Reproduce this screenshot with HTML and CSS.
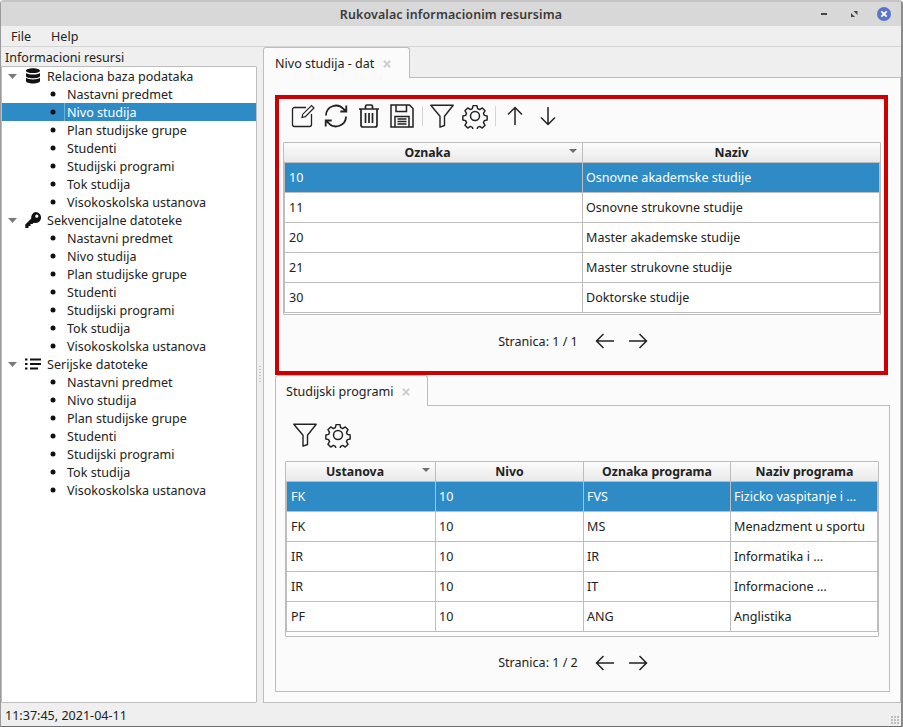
FILE: index.html
```html
<!DOCTYPE html>
<html lang="sr">
<head>
<meta charset="utf-8">
<title>Rukovalac informacionim resursima</title>
<link rel="stylesheet" href="styles.css">
</head>
<body>
<svg class="defs" width="0" height="0" aria-hidden="true">
  <symbol id="i-filter" viewBox="0 0 24 24"><path d="M.8 1.200h22.400l-8.700 11v9.300l-4.500 1.700v-11z" fill="none" stroke="#222" stroke-width="1.400" stroke-linejoin="round"/></symbol>
  <symbol id="i-gear" viewBox="0 0 26 26"><path d="M10.800 1.500h4.400l.7 3.300 2.300 1 2.900-1.800 3.100 3.100-1.800 2.900 1 2.300 3.100.7v4.400l-3.100.7-1 2.300 1.800 2.900-3.100 3.100-2.900-1.800-2.300 1-.7 3.100h-4.400l-.7-3.100-2.300-1-2.900 1.800-3.100-3.100 1.800-2.900-1-2.300-3.100-.7v-4.400l3.100-.7 1-2.300-1.800-2.900 3.100-3.100 2.900 1.800 2.300-1z" transform="translate(1.300 1.300) scale(.9)" fill="none" stroke="#222" stroke-width="1.600" stroke-linejoin="round"/><circle cx="13" cy="13" r="4.500" fill="none" stroke="#222" stroke-width="1.500"/></symbol>
  <symbol id="i-left" viewBox="0 0 20 16"><path d="M19 8H1.500M8.500 1l-7 7 7 7" fill="none" stroke="#222" stroke-width="1.500"/></symbol>
  <symbol id="i-right" viewBox="0 0 20 16"><path d="M1 8h17.500M11.500 1l7 7-7 7" fill="none" stroke="#222" stroke-width="1.500"/></symbol>
  <symbol id="i-bullet" viewBox="0 0 6 6"><circle cx="3" cy="3" r="2.500" fill="#111"/></symbol>
  <symbol id="i-expand" viewBox="0 0 9 5"><path d="M0 0h9L4.500 5z" fill="#7b7b7b"/></symbol>
  <symbol id="i-close" viewBox="0 0 8 8"><path d="M.8.800l6.400 6.400M7.200.800L.8 7.200" fill="none" stroke="#cfcfcf" stroke-width="2"/></symbol>
</svg>
<div class="window">
  <header class="titlebar">
    <span class="title">Rukovalac informacionim resursima</span>
    <div class="winbtns">
      <svg class="winbtn" width="16" height="16" viewBox="0 0 16 16"><rect x="3" y="7" width="6" height="2" fill="#444"/></svg>
      <svg class="winbtn" width="16" height="16" viewBox="0 0 16 16"><path d="M6.500 5h4v4zM4 7l4 4H4z" fill="#444"/></svg>
      <svg class="winbtn" width="16" height="16" viewBox="0 0 16 16"><circle cx="8" cy="8" r="7" fill="#5a74c9"/><path d="M5.300 5.300l5.400 5.400M10.700 5.300l-5.400 5.400" stroke="#fff" stroke-width="1.800"/></svg>
    </div>
  </header>
  <nav class="menubar"><span>File</span><span>Help</span></nav>
  <main class="content">
    <aside class="sidebar">
      <div class="dock-title">Informacioni resursi</div>
      <div class="tree">
        <div class="group"><svg class="arrow"><use href="#i-expand"/></svg>
          <svg class="gicon" viewBox="0 0 16 16"><path d="M8 .3c3.800 0 7 1 7 2.400S11.800 5.100 8 5.100 1 4.100 1 2.700 4.200.3 8 .3zM1 5c1.500 1.200 4.200 1.600 7 1.600s5.500-.4 7-1.600v2.900c0 1.300-3.200 2.300-7 2.300S1 9.200 1 7.900zM1 9.800c1.500 1.200 4.200 1.600 7 1.600s5.500-.4 7-1.600v3.300c0 1.400-3.200 2.500-7 2.500s-7-1.100-7-2.500z" fill="#111"/></svg>
          <span>Relaciona baza podataka</span></div>
        <div class="leaf"><svg class="bullet"><use href="#i-bullet"/></svg><span>Nastavni predmet</span></div>
        <div class="leaf selected"><svg class="bullet"><use href="#i-bullet"/></svg><span class="focus">Nivo studija</span></div>
        <div class="leaf"><svg class="bullet"><use href="#i-bullet"/></svg><span>Plan studijske grupe</span></div>
        <div class="leaf"><svg class="bullet"><use href="#i-bullet"/></svg><span>Studenti</span></div>
        <div class="leaf"><svg class="bullet"><use href="#i-bullet"/></svg><span>Studijski programi</span></div>
        <div class="leaf"><svg class="bullet"><use href="#i-bullet"/></svg><span>Tok studija</span></div>
        <div class="leaf"><svg class="bullet"><use href="#i-bullet"/></svg><span>Visokoskolska ustanova</span></div>
        <div class="group"><svg class="arrow"><use href="#i-expand"/></svg>
          <svg class="gicon" viewBox="0 0 16 16"><path d="M10.500 0a5.500 5.500 0 1 1-1.700 10.700L7.500 12H5.500v2H3.500v2H.3v-3.500l6-6A5.500 5.500 0 0 1 10.500 0zm1.300 2.600a1.600 1.600 0 1 0 0 3.200 1.600 1.600 0 0 0 0-3.200z" fill="#111"/></svg>
          <span>Sekvencijalne datoteke</span></div>
        <div class="leaf"><svg class="bullet"><use href="#i-bullet"/></svg><span>Nastavni predmet</span></div>
        <div class="leaf"><svg class="bullet"><use href="#i-bullet"/></svg><span>Nivo studija</span></div>
        <div class="leaf"><svg class="bullet"><use href="#i-bullet"/></svg><span>Plan studijske grupe</span></div>
        <div class="leaf"><svg class="bullet"><use href="#i-bullet"/></svg><span>Studenti</span></div>
        <div class="leaf"><svg class="bullet"><use href="#i-bullet"/></svg><span>Studijski programi</span></div>
        <div class="leaf"><svg class="bullet"><use href="#i-bullet"/></svg><span>Tok studija</span></div>
        <div class="leaf"><svg class="bullet"><use href="#i-bullet"/></svg><span>Visokoskolska ustanova</span></div>
        <div class="group"><svg class="arrow"><use href="#i-expand"/></svg>
          <svg class="gicon" viewBox="0 0 16 16"><path d="M0 2.500h2.500v2H0zM5 2.500H16v2H5zM0 7h2.500v2H0zM5 7H16v2H5zM0 11.500h2.500v2H0zM5 11.500H13v2H5z" fill="#111"/></svg>
          <span>Serijske datoteke</span></div>
        <div class="leaf"><svg class="bullet"><use href="#i-bullet"/></svg><span>Nastavni predmet</span></div>
        <div class="leaf"><svg class="bullet"><use href="#i-bullet"/></svg><span>Nivo studija</span></div>
        <div class="leaf"><svg class="bullet"><use href="#i-bullet"/></svg><span>Plan studijske grupe</span></div>
        <div class="leaf"><svg class="bullet"><use href="#i-bullet"/></svg><span>Studenti</span></div>
        <div class="leaf"><svg class="bullet"><use href="#i-bullet"/></svg><span>Studijski programi</span></div>
        <div class="leaf"><svg class="bullet"><use href="#i-bullet"/></svg><span>Tok studija</span></div>
        <div class="leaf"><svg class="bullet"><use href="#i-bullet"/></svg><span>Visokoskolska ustanova</span></div>
      </div>
    </aside>
    <div class="splitter"><i class="grip"></i></div>
    <section class="workspace">
      <div class="tabbar"><div class="tab tab-main"><span>Nivo studija - dat</span><svg class="close"><use href="#i-close"/></svg></div></div>
      <div class="pane">
        <div class="panel-top">
          <div class="toolbar">
            <svg class="tool t-edit" viewBox="0 0 24 24"><path d="M15 3.500H3.500a2 2 0 0 0-2 2v15a2 2 0 0 0 2 2h15a2 2 0 0 0 2-2V10" fill="none" stroke="#222" stroke-width="1.300"/><path d="M11 13.500l.8-3.300L20.500 1.500l2.500 2.500-8.700 8.700z" fill="none" stroke="#222" stroke-width="1.200"/></svg>
            <svg class="tool t-sync" viewBox="0 0 24 24"><path d="M2 11.500A10 10 0 0 1 19.500 5L22 7.500M22.300 1.500v6h-6M22 12.500A10 10 0 0 1 4.500 19L2 16.500M1.700 22.500v-6h6" fill="none" stroke="#222" stroke-width="1.800"/></svg>
            <svg class="tool t-trash" viewBox="0 0 22 24"><path d="M1 5h20M7.500 5V2.500a1.500 1.500 0 0 1 1.500-1.500h4a1.500 1.500 0 0 1 1.500 1.500V5M3 5v16a2 2 0 0 0 2 2h12a2 2 0 0 0 2-2V5M7.500 9v10M11 9v10M14.500 9v10" fill="none" stroke="#222" stroke-width="1.700"/></svg>
            <svg class="tool t-save" viewBox="0 0 24 24"><path d="M1 1h18.500L23 4.500V23H1zM6 1v6.500h10.500V1M5 23V12.500h14V23M7.500 15h9M7.500 17.500h9M7.500 20h9" fill="none" stroke="#222" stroke-width="1.500"/></svg>
            <i class="sep"></i>
            <svg class="tool t-filter"><use href="#i-filter"/></svg>
            <svg class="tool t-gear"><use href="#i-gear"/></svg>
            <i class="sep sep-b"></i>
            <svg class="tool t-arrow" viewBox="0 0 16 20"><path d="M8 19V2M1 8.500L8 1.500l7 7" fill="none" stroke="#222" stroke-width="1.500"/></svg>
            <svg class="tool t-arrow" viewBox="0 0 16 20"><path d="M8 1v17M1 11.500l7 7 7-7" fill="none" stroke="#222" stroke-width="1.500"/></svg>
          </div>
          <div class="tablewrap">
            <table class="grid grid-two">
              <thead><tr><th class="sorted">Oznaka</th><th>Naziv</th></tr></thead>
              <tbody>
                <tr class="sel"><td>10</td><td>Osnovne akademske studije</td></tr>
                <tr><td>11</td><td>Osnovne strukovne studije</td></tr>
                <tr><td>20</td><td>Master akademske studije</td></tr>
                <tr><td>21</td><td>Master strukovne studije</td></tr>
                <tr><td>30</td><td>Doktorske studije</td></tr>
              </tbody>
            </table>
          </div>
          <div class="pager"><span>Stranica: 1 / 1</span>
            <svg class="nav"><use href="#i-left"/></svg><svg class="nav"><use href="#i-right"/></svg></div>
        </div>
        <div class="tabbar"><div class="tab tab-sub"><span>Studijski programi</span><svg class="close"><use href="#i-close"/></svg></div></div>
        <div class="subpane">
          <div class="toolbar toolbar-sub">
            <svg class="tool t-filter"><use href="#i-filter"/></svg>
            <svg class="tool t-gear"><use href="#i-gear"/></svg>
          </div>
          <div class="tablewrap tablewrap-sub">
            <table class="grid grid-four">
              <thead><tr><th class="sorted">Ustanova</th><th>Nivo</th><th>Oznaka programa</th><th>Naziv programa</th></tr></thead>
              <tbody>
                <tr class="sel"><td>FK</td><td>10</td><td>FVS</td><td>Fizicko vaspitanje i …</td></tr>
                <tr><td>FK</td><td>10</td><td>MS</td><td>Menadzment u sportu</td></tr>
                <tr><td>IR</td><td>10</td><td>IR</td><td>Informatika i …</td></tr>
                <tr><td>IR</td><td>10</td><td>IT</td><td>Informacione …</td></tr>
                <tr><td>PF</td><td>10</td><td>ANG</td><td>Anglistika</td></tr>
              </tbody>
            </table>
          </div>
          <div class="pager pager-sub"><span>Stranica: 1 / 2</span>
            <svg class="nav"><use href="#i-left"/></svg><svg class="nav"><use href="#i-right"/></svg></div>
        </div>
      </div>
    </section>
  </main>
  <footer class="statusbar">11:37:45, 2021-04-11</footer>
</div>
</body>
</html>
```
FILE: styles.css
```css
* { box-sizing: border-box; }
html, body { margin: 0; padding: 0; }
body {
  width: 903px; height: 727px; overflow: hidden; background: #fff;
  font-family: "Noto Sans", "Open Sans", sans-serif; font-size: 12.55px; color: #222;
}
.defs { display: block; height: 0; }
.window {
  width: 903px; height: 727px; display: flex; flex-direction: column;
  background: #efefef; border-top: 2px solid #c4c4c4; border-left: 1px solid #9a9a9a;
  border-right: 2px solid #8c8c8c; border-bottom: 1px solid #6e6e6e;
  border-radius: 4px 4px 0 0;
}
.titlebar {
  flex: none; height: 24px; background: #d8d8d8; display: flex; align-items: center;
  justify-content: center; position: relative;
}
.title { font-weight: 600; font-size: 12.4px; color: #3a3a3a; letter-spacing: .15px; }
.winbtns { position: absolute; right: 9px; top: 4px; display: flex; gap: 13px; }
.winbtn { display: block; }
.menubar {
  flex: none; height: 21px; display: flex; gap: 20px; padding: 0 10px; align-items: center;
  border-bottom: 1px solid #d5d5d5; background: #efefef;
}
.content { flex: 1; min-height: 0; display: flex; }
.sidebar { flex: none; width: 256px; display: flex; flex-direction: column; }
.dock-title { flex: none; height: 19px; line-height: 22px; padding-left: 4px; }
.tree { flex: 1; background: #fff; border: 1px solid #bdbdbd; border-radius: 1px; }
.group, .leaf { height: 18px; display: flex; align-items: center; white-space: nowrap; }
.group > span { margin-left: 6px; }
.arrow { width: 9px; height: 5px; margin: 0 8px 0 6px; flex: none; }
.gicon { width: 16px; height: 16px; flex: none; }
.bullet { width: 6px; height: 6px; margin-left: 48px; margin-right: 11px; flex: none; }
.leaf.selected { background: #2e8bc6; color: #fff; }
.focus { align-self: stretch; display: flex; align-items: center; border-left: 1px solid #6db0da; padding-left: 2px; margin-left: -3px; }
.splitter { flex: none; width: 6px; display: flex; align-items: center; justify-content: center; }
.grip { display: block; width: 2px; height: 18px; background: repeating-linear-gradient(#c6c6c6 0 1px, transparent 1px 3px); }
.workspace { flex: 1; min-width: 0; display: flex; flex-direction: column; }
.tabbar { flex: none; height: 30px; display: flex; }
.tab {
  height: 31px; display: flex; align-items: center; background: #fbfbfb; position: relative; z-index: 1;
  border: 1px solid #bdbdbd; border-bottom: none; border-radius: 3px 3px 0 0; padding: 1px 0 0 11px;
}
.tab-main { width: 147px; }
.tab-sub { width: 153px; padding-left: 10px; }
.close { width: 8px; height: 8px; margin-left: 9px; flex: none; }
.pane {
  flex: 1; min-height: 0; background: #fbfbfb; border: 1px solid #bdbdbd;
  padding: 17px 5px 0 11px; display: flex; flex-direction: column;
}
.panel-top {
  flex: none; height: 280px; width: 613px; border: 4px solid #cc0000; padding: 0 3px 0 4px; display: flex; flex-direction: column;
}
.toolbar { flex: none; height: 43px; display: flex; align-items: center; padding: 0 0 9px 8px; }
.tool { display: block; flex: none; }
.t-edit { width: 24px; height: 24px; margin-right: 9px; }
.t-sync { width: 24px; height: 24px; margin-right: 10px; }
.t-trash { width: 22px; height: 24px; margin-right: 10px; }
.t-save { width: 24px; height: 24px; margin-right: 8px; }
.t-filter { width: 24px; height: 24px; }
.t-gear { width: 26px; height: 26px; margin-left: 8px; }
.t-arrow { width: 16px; height: 20px; margin-right: 17px; }
.sep { width: 1px; height: 20px; background: #d4d4d4; margin-right: 7px; flex: none; }
.sep-b { margin: 0 11px 0 7px; }
.tablewrap { flex: none; border: 1px solid #bdbdbd; border-radius: 1px; padding: 0 0 1px 0; background: #fdfdfd; }
.tablewrap-sub { padding-bottom: 4px; }
.grid { border-collapse: separate; border-spacing: 0; table-layout: fixed; width: 100%; background: #fff; }
.grid-two th:nth-child(1) { width: 299px; }
.grid-four th:nth-child(1) { width: 150px; }
.grid-four th:nth-child(2) { width: 148px; }
.grid-four th:nth-child(3) { width: 147px; }
.grid th {
  height: 20px; padding: 0; font-weight: 700; font-size: 12.3px; text-align: center; color: #222; position: relative;
  background: linear-gradient(#fcfcfc, #e9e9e9); border-right: 1px solid #bdbdbd; border-bottom: 1px solid #bdbdbd;
}
.grid th:last-child { border-right: none; }
.grid th.sorted { padding-right: 11px; }
.grid td { height: 30px; padding: 0 0 0 3px; border-right: 1px solid #bdbdbd; border-bottom: 1px solid #bdbdbd; white-space: nowrap; overflow: hidden; }
.grid td:first-child { padding-left: 4px; border-left: 1px solid #bdbdbd; }
.grid .sel td { background: #2e8bc6; color: #fff; }
.sorted::after {
  content: ""; position: absolute; right: 5px; top: 6px; border: 4px solid transparent; border-top: 4px solid #6e6e6e; border-bottom: none;
}
.pager { flex: 1; display: flex; align-items: center; justify-content: center; padding: 0 18px 4px 0; }
.nav { width: 20px; height: 16px; display: block; margin-left: 17px; }
.nav + .nav { margin-left: 13px; }
.subpane {
  flex: none; height: 287px; width: 615px; background: #fbfbfb; border: 1px solid #bdbdbd; padding: 0 10px 0 9px; display: flex; flex-direction: column;
}
.toolbar-sub { height: 55px; padding: 3px 0 0 8px; }
.pager-sub { padding: 0 18px 3px 0; }
.statusbar { flex: none; height: 23px; line-height: 25px; padding-left: 4px; position: relative; }
.statusbar::after {
  content: ""; position: absolute; right: 1px; bottom: 1px; width: 9px; height: 9px;
  background: radial-gradient(circle at 1px 1px, #bdbdbd 1px, transparent 1px) 0 0 / 3px 3px;
}
```
